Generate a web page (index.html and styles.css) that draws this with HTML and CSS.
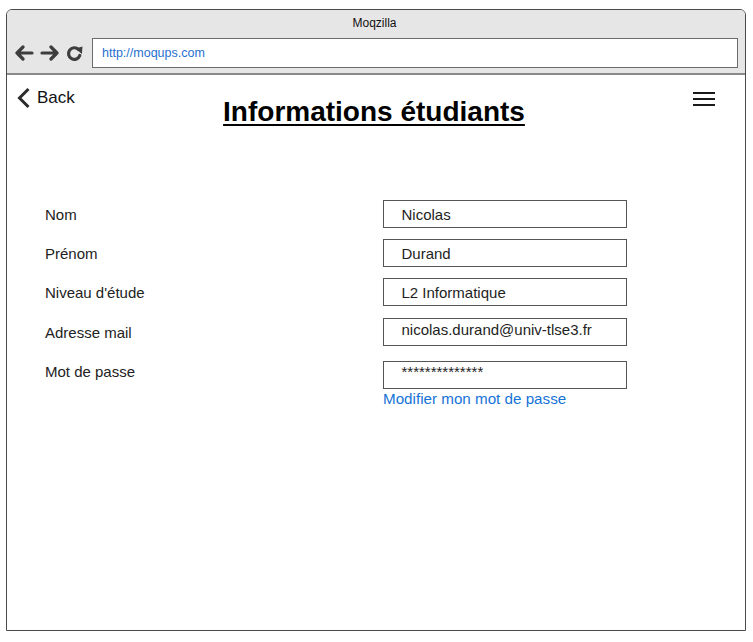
FILE: index.html
```html
<!DOCTYPE html>
<html lang="fr">
<head>
<meta charset="utf-8">
<title>Moqzilla</title>
<link rel="stylesheet" href="styles.css">
</head>
<body>
<div class="window">
  <div class="titlebar">
    <div class="wintitle">Moqzilla</div>
    <div class="toolbar">
      <div class="navicons">
        <svg class="nav" width="20" height="16" viewBox="0 0 20 16"><path d="M18 8H3M9 2L3 8l6 6" fill="none" stroke="#3d3d3d" stroke-width="3.2" stroke-linecap="round" stroke-linejoin="round"/></svg>
        <svg class="nav" width="20" height="16" viewBox="0 0 20 16"><path d="M2 8h15M11 2l6 6-6 6" fill="none" stroke="#3d3d3d" stroke-width="3.2" stroke-linecap="round" stroke-linejoin="round"/></svg>
        <svg class="nav" width="18" height="17" viewBox="0 0 18 17"><path d="M13.8 10.5A5.8 5.8 0 1 1 12.4 4.4" fill="none" stroke="#3d3d3d" stroke-width="3.2" stroke-linecap="round"/><path d="M9.2 3.4l7.3-1.8-.6 7.4z" fill="#3d3d3d"/></svg>
      </div>
      <div class="url">http://moqups.com</div>
    </div>
  </div>
  <div class="content">
    <div class="header">
      <div class="back">
        <svg width="14" height="22" viewBox="0 0 14 22"><path d="M11.5 2L2.5 11l9 9" fill="none" stroke="#2b2b2b" stroke-width="3"/></svg>
        <span>Back</span>
      </div>
      <h1 class="title">Informations étudiants</h1>
      <div class="menu">
        <span class="bar"></span><span class="bar"></span><span class="bar"></span>
      </div>
    </div>
    <div class="form">
      <div class="row r1">
        <div class="label">Nom</div>
        <div class="field">Nicolas</div>
      </div>
      <div class="row r2">
        <div class="label">Prénom</div>
        <div class="field">Durand</div>
      </div>
      <div class="row r3">
        <div class="label">Niveau d'étude</div>
        <div class="field">L2 Informatique</div>
      </div>
      <div class="row r4">
        <div class="label">Adresse mail</div>
        <div class="field top">nicolas.durand@univ-tlse3.fr</div>
      </div>
      <div class="row r5 start">
        <div class="label pw">Mot de passe</div>
        <div class="fieldcol">
          <div class="field top short">**************</div>
          <a class="link" href="#">Modifier mon mot de passe</a>
        </div>
      </div>
    </div>
  </div>
</div>
</body>
</html>
```
FILE: styles.css
```css
* { box-sizing: border-box; }
html, body { margin: 0; padding: 0; background: #fff; }
body { font-family: "Liberation Sans", Arial, sans-serif; color: #1e1e1e; }

.window {
  margin: 9px 0 0 6px;
  width: 740px;
  height: 622px;
  border: 1px solid #4a4a4a;
  border-radius: 6px 6px 0 0;
  display: flex;
  flex-direction: column;
  overflow: hidden;
}
.titlebar {
  background: #e6e6e6;
  height: 65px;
  border-bottom: 2px solid #8a8a8a;
  flex: none;
}
.wintitle {
  text-align: center;
  font-size: 12px;
  line-height: 16px;
  padding-top: 5px;
  padding-right: 3px;
  color: #111;
}
.toolbar {
  display: flex;
  align-items: center;
  margin-top: 7px;
  padding-left: 7px;
}
.navicons { display: flex; align-items: center; gap: 6px; width: 78px; }
.nav { display: block; }
.url {
  width: 646px;
  height: 30px;
  background: #fff;
  border: 1.5px solid #6b6b6b;
  font-size: 12.5px;
  line-height: 27px;
  padding: 1px 0 0 9px;
  color: #1f6fd0;
}

.content { flex: 1; }
.header {
  display: grid;
  grid-template-columns: 1fr auto 1fr;
  align-items: start;
}
.back {
  display: flex;
  align-items: center;
  gap: 6px;
  margin: 12px 0 0 10px;
  font-size: 17px;
  line-height: 20px;
  color: #111;
}
.back svg { display: block; }
.title {
  margin: 21px 4px 0 0;
  font-size: 28px;
  line-height: 32px;
  font-weight: bold;
  text-decoration: underline;
  text-decoration-thickness: 2px;
  text-underline-offset: 3px;
  color: #000;
}
.menu {
  justify-self: end;
  margin: 17px 30px 0 0;
  width: 22px;
  display: flex;
  flex-direction: column;
  gap: 4px;
}
.bar { display: block; height: 2px; background: #1a1a1a; }

.form { margin-top: 72px; padding-left: 38px; }
.row {
  display: grid;
  grid-template-columns: 338px 244px;
  align-items: center;
}
.row.start { align-items: start; }
.r2 { margin-top: 11px; }
.r3 { margin-top: 11px; }
.r4 { margin-top: 12px; }
.r5 { margin-top: 15px; }
.label { font-size: 15px; line-height: 18px; color: #222; padding-top: 2px; }
.label.pw { padding-top: 2px; }
.field {
  height: 28px;
  border: 1.5px solid #555;
  font-size: 15px;
  line-height: 18px;
  padding: 4.5px 0 0 17.5px;
  color: #1e1e1e;
  white-space: nowrap;
}
.field.top { padding-top: 1.5px; }
.field.short { height: 28px; font-size: 15px; padding-top: 0.5px; }
.link {
  display: block;
  font-size: 15.2px;
  line-height: 20px;
  color: #1773d6;
  text-decoration: none;
}
```
